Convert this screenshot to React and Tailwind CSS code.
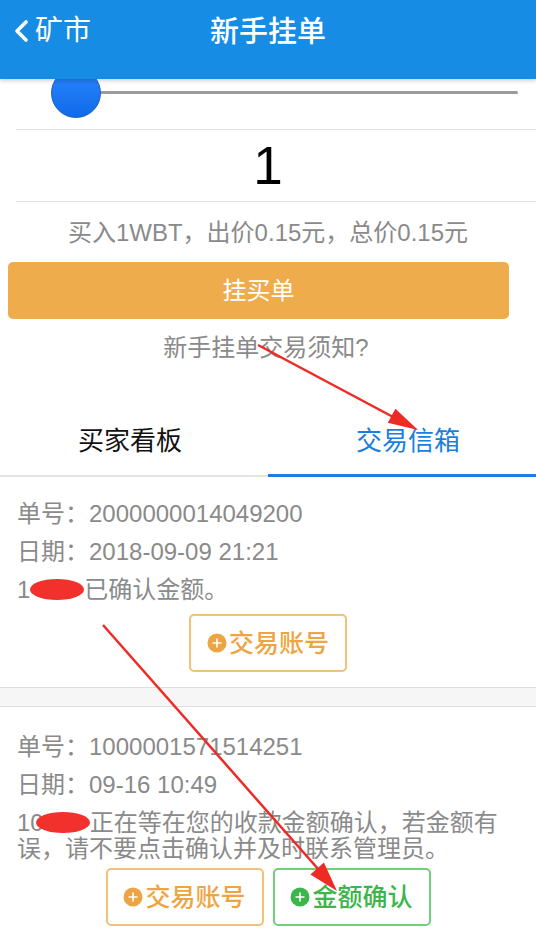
import React from 'react';

const FONT = { fontFamily: '"Liberation Sans", "Noto Sans CJK SC", sans-serif' };

const PlusDot = ({ color }) => (
  <svg width="20" height="20" viewBox="0 0 20 20" className="shrink-0">
    <circle cx="10" cy="10" r="9.5" fill={color} />
    <path d="M10 5.5v9M5.5 10h9" stroke="#fff" strokeWidth="1.6" />
  </svg>
);

const ActionButton = ({ label, tone }) => {
  const orange = tone === 'orange';
  return (
    <button
      className={`w-[158px] h-[58px] rounded-[5px] border-2 flex items-center justify-center gap-[2px] text-[25px] font-medium bg-white ${
        orange ? 'border-[#f0c27a] text-[#eda543]' : 'border-[#6fd07b] text-[#3cb64b]'
      }`}
    >
      <PlusDot color={orange ? '#eda543' : '#3cb64b'} />
      <span>{label}</span>
    </button>
  );
};

const Blot = () => (
  <span className="inline-block align-middle w-[54px] h-[21px] -mt-[4px] rounded-[50%] bg-[#f2302c]" />
);

export default function App() {
  return (
    <div className="relative w-full min-h-screen bg-white overflow-hidden" style={FONT}>
      {/* Header */}
      <div className="relative z-10 h-[79px] bg-[#168ce4] shadow-[0_2px_4px_rgba(0,0,0,0.18)] grid grid-cols-[1fr_auto_1fr] items-start pt-[13px] text-white">
        <div className="flex items-center pl-[12px] h-[36px]">
          <svg width="18" height="24" viewBox="0 0 18 24">
            <polyline points="14,3 5,12 14,21" fill="none" stroke="#fff" strokeWidth="3.6" strokeLinecap="round" strokeLinejoin="round" />
          </svg>
          <span className="ml-[5px] text-[28px] leading-[36px]">矿市</span>
        </div>
        <div className="text-[29px] leading-[38px] font-medium">新手挂单</div>
        <div />
      </div>

      {/* Slider */}
      <div className="relative h-[50px] pt-[12px]">
        <div className="ml-[100px] mr-[18px] h-[3px] rounded bg-[#9b9b9b]" />
        <div className="absolute left-[51px] top-[-11px] w-[50px] h-[50px] rounded-full border border-[#1460c8] bg-gradient-to-b from-[#2a86ff] to-[#0f6ae8]" />
      </div>
      <div className="ml-4 h-px bg-[#e2e2e2]" />
      <div className="h-[71px] flex items-center justify-center text-[53px] text-black">1</div>
      <div className="ml-4 h-px bg-[#e2e2e2]" />

      {/* Price info */}
      <p className="mt-[16px] text-center text-[24px] leading-[30px] text-[#8a8a8a]">
        买入1WBT，出价0.15元，总价0.15元
      </p>
      <button className="mt-[14px] ml-[8px] w-[501px] h-[57px] rounded-[5px] bg-[#efac4d] text-white text-[24px]">
        挂买单
      </button>
      <p className="mt-[14px] text-center text-[24px] leading-[30px] text-[#8a8a8a] pr-[4px]">新手挂单交易须知?</p>

      {/* Tabs */}
      <div className="mt-[42px] grid grid-cols-2">
        <div className="h-[72px] flex items-center justify-center border-b-2 border-[#e3e3e3] text-[26px] text-[#111] pr-[8px] pt-[2px]">
          买家看板
        </div>
        <div className="h-[72px] flex items-center justify-center border-b-[3px] border-[#1a7fdc] text-[26px] text-[#1a7fdc] pt-[3px] pl-[12px]">
          交易信箱
        </div>
      </div>

      {/* Card 1 */}
      <div className="px-[17px] pt-[18px] pb-[15px] text-[24px] leading-[38px] text-[#8a8a8a]">
        <div>单号：2000000014049200</div>
        <div>日期：2018-09-09 21:21</div>
        <div>
          1<Blot />已确认金额。
        </div>
        <div className="mt-[5px] flex justify-center">
          <ActionButton label="交易账号" tone="orange" />
        </div>
      </div>

      <div className="h-[20px] border-y border-[#dedede] bg-[#f6f6f6]" />

      {/* Card 2 */}
      <div className="px-[17px] pt-[21px] text-[24px] leading-[38px] text-[#8a8a8a]">
        <div>单号：1000001571514251</div>
        <div>日期：09-16 10:49</div>
        <p className="mt-[6px] leading-[26px] whitespace-nowrap">
          10<span className="-ml-[8px]"><Blot /></span>正在等在您的收款金额确认，若金额有
          <br />
          误，请不要点击确认并及时联系管理员。
        </p>
        <div className="mt-[6px] flex justify-center gap-[9px]">
          <ActionButton label="交易账号" tone="orange" />
          <ActionButton label="金额确认" tone="green" />
        </div>
      </div>

      {/* Annotation arrows */}
      <svg className="absolute inset-0 pointer-events-none z-20" width="536" height="933" viewBox="0 0 536 933">
        <line x1="258" y1="345" x2="395" y2="418" stroke="#ee2a24" strokeWidth="2.5" />
        <polygon points="418,430 387.8,422.8 395.4,408.8" fill="#ee2a24" />
        <line x1="103" y1="625" x2="319" y2="870" stroke="#ee2a24" strokeWidth="2.5" />
        <polygon points="337,891 310.4,874.5 323.9,862.5" fill="#ee2a24" />
      </svg>
    </div>
  );
}
